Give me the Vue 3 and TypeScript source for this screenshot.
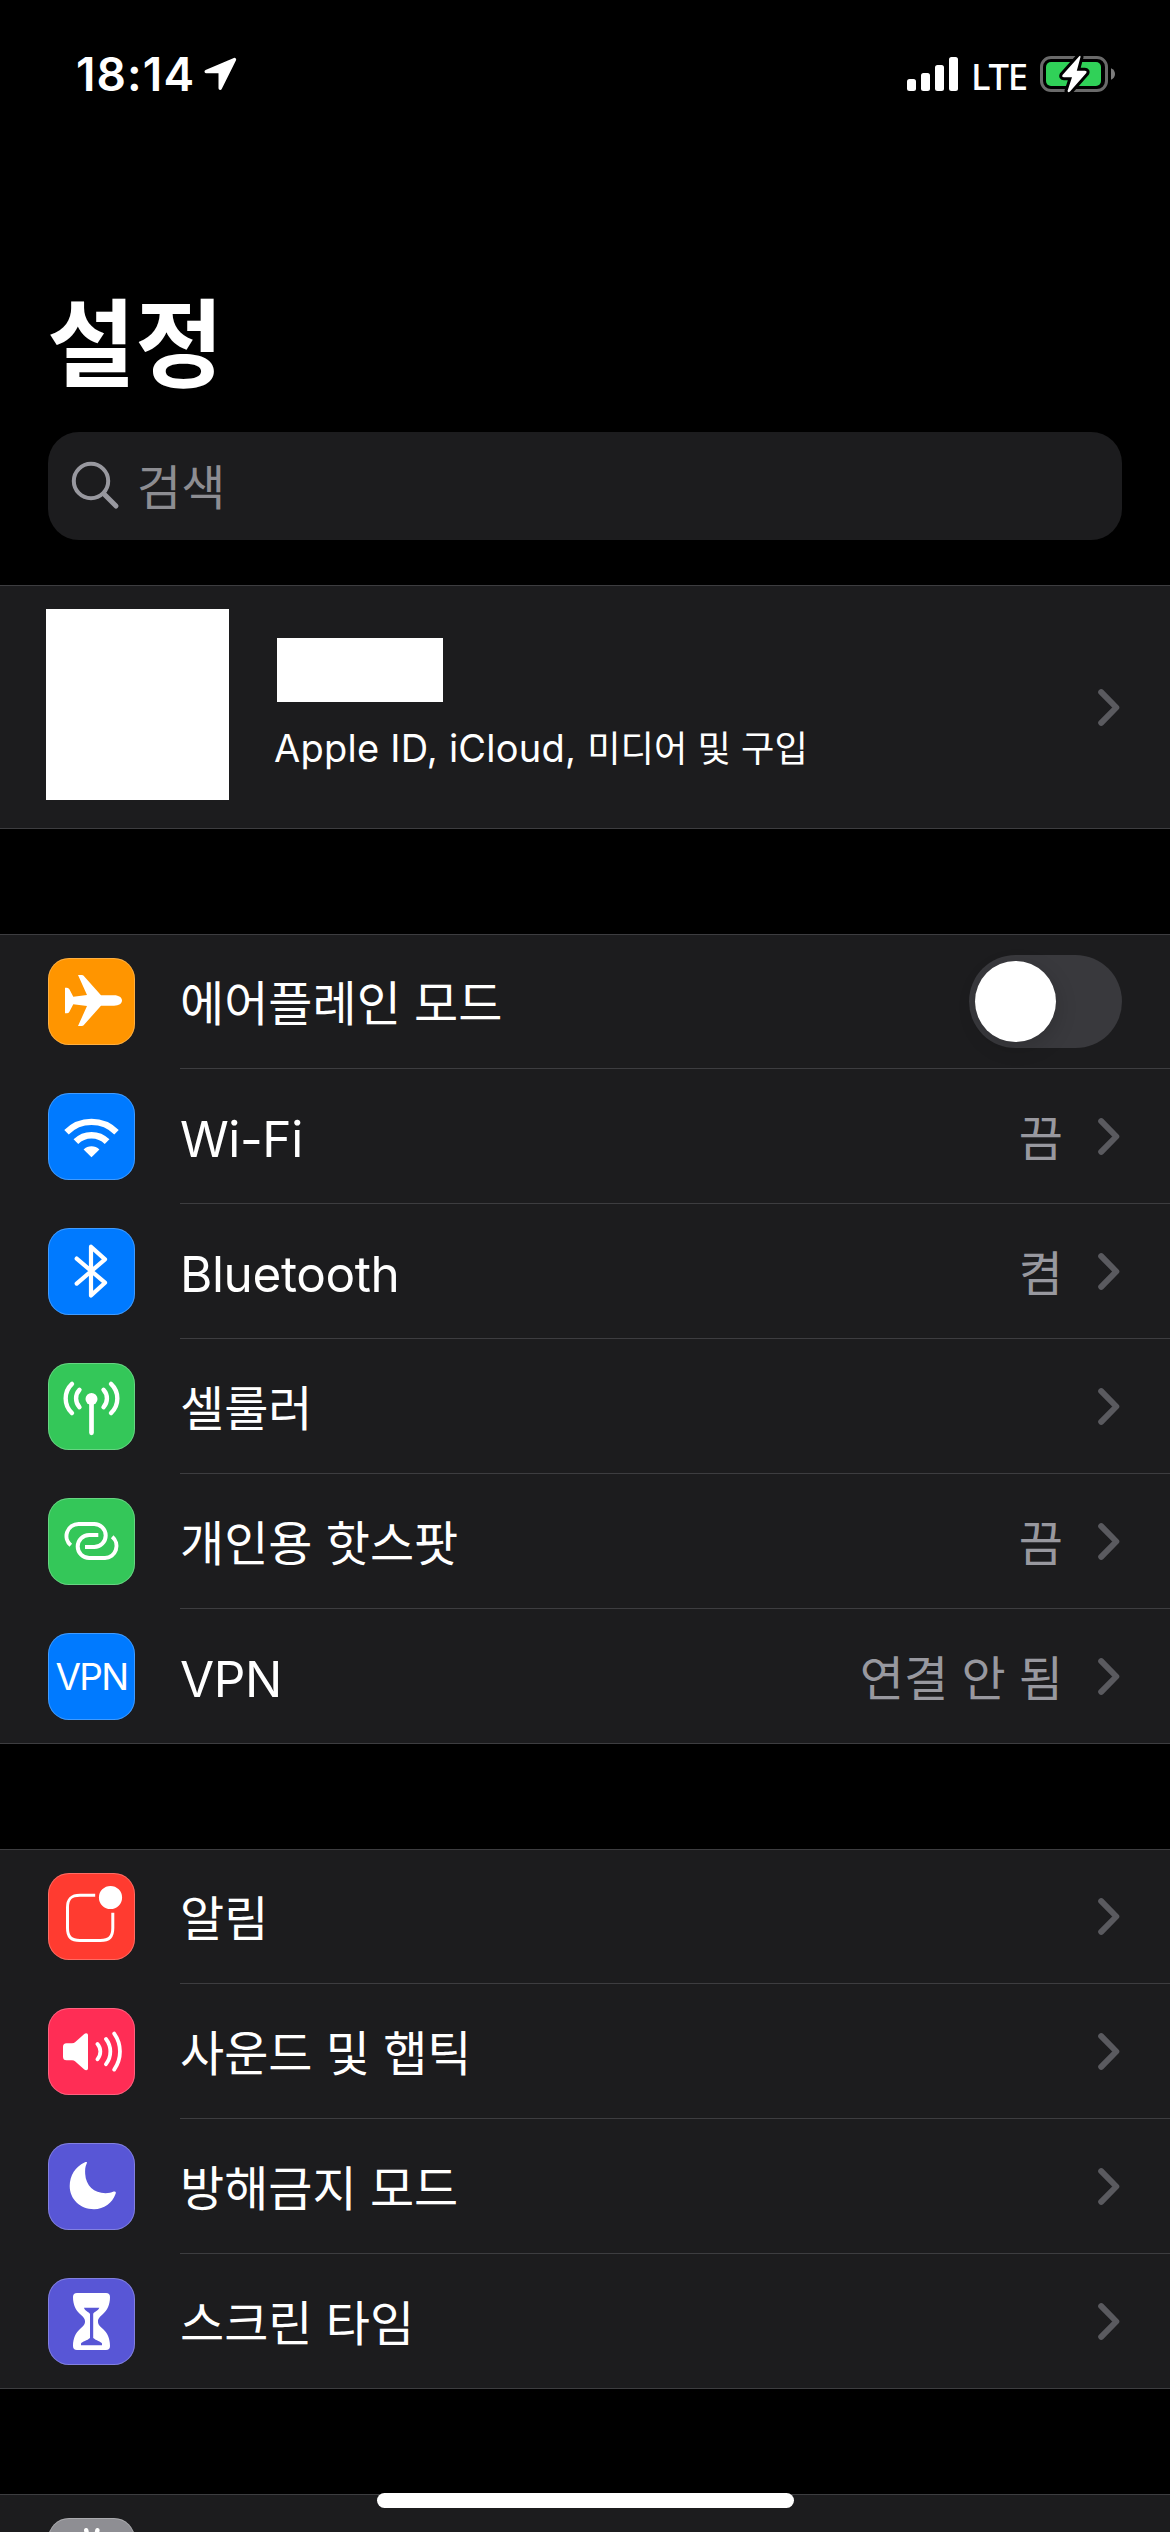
<script setup lang="ts">
import { ref } from 'vue'

interface Shape {
  d: string
  stroke?: number
  color?: string
  cap?: 'round' | 'butt'
}

interface Row {
  id: string
  label: string
  latin?: boolean
  color: string
  shapes: Shape[]
  badge?: string
  value?: string
  toggle?: boolean
}

const airplane = ref(false)

const connectivity: Row[] = [
  {
    id: 'airplane',
    label: '에어플레인 모드',
    color: '#ff9500',
    toggle: true,
    shapes: [
      {
        d: 'M53 37.3H66C71 37.3 74 39.6 74 42.5S71 47.7 66 47.7H53L36.5 66.3Q35.5 68 34 68H30L39 48L25.3 46.3L21.4 53.8Q20.5 55.3 19 55.3H17V29.7H19Q20.5 29.7 21.4 31.2L25.3 38.7L39 37L30 17H34Q35.5 17 36.5 18.7Z',
      },
    ],
  },
  {
    id: 'wifi',
    label: 'Wi-Fi',
    latin: true,
    color: '#007aff',
    value: '끔',
    shapes: [
      { d: 'M18.5 39.3A35.3 35.3 0 0 1 68.5 39.3', stroke: 6.3, cap: 'butt' },
      { d: 'M27.9 48.7A22 22 0 0 1 59.1 48.7', stroke: 6.6, cap: 'butt' },
      { d: 'M43.5 64.3L35.6 56.4A11.4 11.4 0 0 1 51.4 56.4Z' },
    ],
  },
  {
    id: 'bluetooth',
    label: 'Bluetooth',
    latin: true,
    color: '#007aff',
    value: '켬',
    shapes: [{ d: 'M28.7 30.6L57 54.7L43 67.5V18.7L57 31.4L28.7 55.6', stroke: 4.2 }],
  },
  {
    id: 'cellular',
    label: '셀룰러',
    color: '#34c759',
    shapes: [
      { d: 'M37.5 36A6 6 0 1 1 49.5 36A6 6 0 1 1 37.5 36Z' },
      { d: 'M43.5 36V69.8', stroke: 4.7 },
      { d: 'M31.5 26.8A12.8 12.8 0 0 0 31.5 44.2M55.5 26.8A12.8 12.8 0 0 1 55.5 44.2', stroke: 4.4 },
      { d: 'M24 20.9A20 20 0 0 0 24 50.1M63 20.9A20 20 0 0 1 63 50.1', stroke: 4.4 },
    ],
  },
  {
    id: 'hotspot',
    label: '개인용 핫스팟',
    color: '#34c759',
    value: '끔',
    shapes: [
      { d: 'M22.8 47.2A12 12 0 0 1 30.5 26H46.2A11.5 11.5 0 0 1 46.2 49H37', stroke: 4, cap: 'butt' },
      { d: 'M50.3 37H41.2A11.5 11.5 0 0 0 41.2 60H57A12 12 0 0 0 64.2 38.8', stroke: 4, cap: 'butt' },
    ],
  },
  {
    id: 'vpn',
    label: 'VPN',
    latin: true,
    color: '#007aff',
    badge: 'VPN',
    value: '연결 안 됨',
    shapes: [],
  },
]

const alerts: Row[] = [
  {
    id: 'notifications',
    label: '알림',
    color: '#ff3b30',
    shapes: [
      {
        d: 'M47.2 22.2H32C23 22.2 19.5 25.7 19.5 34.5V55C19.5 64 23 67.4 32 67.4H52.3C61.3 67.4 64.8 64 64.8 55V39.8',
        stroke: 3,
        cap: 'butt',
      },
      { d: 'M50.9 24.5A11.6 11.6 0 1 1 74.1 24.5A11.6 11.6 0 1 1 50.9 24.5Z' },
    ],
  },
  {
    id: 'sounds',
    label: '사운드 및 햅틱',
    color: '#ff2d55',
    shapes: [
      {
        d: 'M18 35.2H24Q26 35.2 27 34.3L36 26.2Q37 25.3 38.3 25.3Q40 25.3 40 27V60.5Q40 62.2 38.3 62.2Q37 62.2 36 61.3L27 53.3Q26 52.3 24 52.3H18.5Q15 52.3 15 48.8V38.7Q15 35.2 18.5 35.2Z',
      },
      {
        d: 'M49.5 36A11.6 11.6 0 0 1 49.5 51.2M58 31A20.5 20.5 0 0 1 58 56.2M66.2 25.6A31 31 0 0 1 66.2 61.6',
        stroke: 3.8,
      },
    ],
  },
  {
    id: 'dnd',
    label: '방해금지 모드',
    color: '#5856d6',
    shapes: [
      {
        d: 'M38.7 20.6C37 23.8 37 27.5 37.2 31C37.8 42.5 46 50.2 57.5 50.2C61 50.2 63.2 49.5 65.6 48.6C67.6 48 68.4 49 67.5 51C64.3 60.2 56 66.2 46 66.2C32 66.2 21.7 56 21.7 43C21.7 32.5 27.5 23.5 36.5 19.5C38.7 18.7 39.5 19 38.7 20.6Z',
      },
    ],
  },
  {
    id: 'screentime',
    label: '스크린 타임',
    color: '#5856d6',
    shapes: [
      {
        d: 'M29 15H58Q62 15 62 19C62 27 59 32.5 55 36C51 39.5 50 41 50 43.5S51 47.5 55 51C59 54.5 62 60 62 68Q62 72 58 72H29Q25 72 25 68C25 60 28 54.5 32 51C36 47.5 37 46 37 43.5S36 39.5 32 36C28 32.5 25 27 25 19Q25 15 29 15Z',
      },
      {
        d: 'M36 29.8H51.3C50.5 33 45.5 34 45.2 36V60C48 62.5 53 63.5 54 65.5V67.3H33V65.5C34 63.5 39.5 62.5 42 60V36C41 34 36.5 33 36 29.8Z',
        color: '#5856d6',
      },
    ],
  },
]

const general: Row[] = [
  {
    id: 'general',
    label: '',
    color: '#8e8e93',
    shapes: [{ d: 'M38.2 12.2L39.4 18M49.4 12.2L48.2 18', stroke: 4.4 }],
  },
]

const groups: Row[][] = [connectivity, alerts, general]
</script>

<template>
  <div class="screen">
    <header class="status">
      <div class="clock">
        <span class="time">18:14</span>
        <svg class="location" width="34" height="34" viewBox="0 0 34 34">
          <path d="M31.5 2.5L3.2 14.6H17.2V31.2Z" fill="#fff" stroke="#fff" stroke-width="3.4" stroke-linejoin="round" />
        </svg>
      </div>
      <div class="indicators">
        <svg class="signal" width="52" height="36" viewBox="0 0 52 36" fill="#fff">
          <rect x="0" y="23" width="9" height="12" rx="2.5" />
          <rect x="14" y="17" width="9" height="18" rx="2.5" />
          <rect x="28" y="9" width="9" height="26" rx="2.5" />
          <rect x="42" y="1" width="9" height="34" rx="2.5" />
        </svg>
        <span class="carrier">LTE</span>
        <svg class="battery" width="76" height="40" viewBox="0 0 76 40">
          <rect x="1.5" y="3.5" width="65" height="33" rx="9.5" fill="none" stroke="#6a6a6a" stroke-width="3" />
          <rect x="6" y="8" width="55" height="24" rx="5" fill="#30d158" />
          <path d="M71 14.2C73.6 15.3 75 17.5 75 20S73.6 24.7 71 25.8Z" fill="#7c7c7c" />
          <path
            d="M39 2.5L22.5 21Q21.5 23.2 24 23.2H32L27.5 37Q28 39 30 37.5L46.3 19Q47.3 16.8 44.8 16.8H36.8L40.5 3Q40.5 1 39 2.5Z"
            fill="#fff"
            stroke="#000"
            stroke-width="6"
            paint-order="stroke"
            stroke-linejoin="round"
          />
        </svg>
      </div>
    </header>

    <h1 class="title">설정</h1>

    <div class="search">
      <svg width="50" height="50" viewBox="0 0 50 50" fill="none" stroke="#98989f" stroke-linecap="round">
        <circle cx="20" cy="20" r="17.2" stroke-width="4" />
        <path d="M33.5 33.5L45 45" stroke-width="5" />
      </svg>
      <span class="placeholder">검색</span>
    </div>

    <section class="profile">
      <div class="avatar"></div>
      <div class="identity">
        <div class="name"></div>
        <p class="subtitle">
          <span class="en">Apple ID, iCloud, </span><span class="ko">미디어 및 구입</span>
        </p>
      </div>
      <svg class="chevron" width="22" height="37" viewBox="0 0 22 37">
        <path d="M3.2 3.2L18.3 18.5L3.2 33.8" />
      </svg>
    </section>

    <section v-for="(rows, index) in groups" :key="index" class="group">
      <div v-for="row in rows" :key="row.id" class="row">
        <div class="tile" :style="{ backgroundColor: row.color }">
          <span v-if="row.badge" class="badge">{{ row.badge }}</span>
          <svg v-else width="87" height="87" viewBox="0 0 87 87">
            <path
              v-for="(shape, i) in row.shapes"
              :key="i"
              :d="shape.d"
              :fill="shape.stroke ? 'none' : shape.color ?? '#fff'"
              :stroke="shape.stroke ? '#fff' : 'none'"
              :stroke-width="shape.stroke ?? 0"
              :stroke-linecap="shape.cap ?? 'round'"
              stroke-linejoin="round"
            />
          </svg>
        </div>
        <div class="content">
          <span class="label" :class="{ latin: row.latin }">{{ row.label }}</span>
          <button
            v-if="row.toggle"
            class="toggle"
            :class="{ on: airplane }"
            role="switch"
            :aria-checked="airplane"
            @click="airplane = !airplane"
          >
            <span class="knob"></span>
          </button>
          <template v-else>
            <span v-if="row.value" class="value">{{ row.value }}</span>
            <svg class="chevron" width="22" height="37" viewBox="0 0 22 37">
              <path d="M3.2 3.2L18.3 18.5L3.2 33.8" />
            </svg>
          </template>
        </div>
      </div>
    </section>

    <div class="home-indicator"></div>
  </div>
</template>

<style>
html,
body {
  margin: 0;
  background: #000;
}
</style>

<style scoped>
.screen {
  position: relative;
  width: 1170px;
  height: 2532px;
  overflow: hidden;
  background: #000;
  color: #fff;
  font-family: 'Noto Sans CJK KR', sans-serif;
}

.status {
  display: flex;
  justify-content: space-between;
  align-items: center;
  box-sizing: border-box;
  height: 148px;
  padding: 0 54px 0 76px;
}

.clock,
.indicators {
  display: flex;
  align-items: center;
}

.time {
  font: 600 46px/60px Inter, sans-serif;
  letter-spacing: 1.1px;
}

.location {
  margin-left: 8px;
}

.signal {
  margin-right: 12px;
}

.carrier {
  width: 54px;
  margin: 3px 15px 0 0;
  font: 500 36.5px/44px 'Noto Sans', sans-serif;
  letter-spacing: -1.2px;
  white-space: nowrap;
}

.title {
  margin: 120px 0 0 47px;
  font-size: 96px;
  line-height: 140px;
  font-weight: 700;
}

.search {
  display: flex;
  align-items: center;
  box-sizing: border-box;
  height: 108px;
  margin: 24px 48px 45px;
  padding-left: 23px;
  border-radius: 31px;
  background: #1c1c1e;
}

.placeholder {
  margin: 0 0 5px 16px;
  color: #8d8d92;
  font-size: 48px;
  line-height: 70px;
}

.profile {
  display: flex;
  align-items: center;
  box-sizing: border-box;
  height: 244px;
  padding: 0 50px 0 46px;
  border-top: 1px solid #3d3d40;
  border-bottom: 1px solid #3d3d40;
  background: #1c1c1e;
}

.avatar {
  width: 183px;
  height: 191px;
  margin-bottom: 5px;
  background: #fff;
}

.identity {
  flex: 1;
  margin: 0 0 9px 45px;
}

.name {
  width: 166px;
  height: 64px;
  margin: 6px 0 16px 3px;
  background: #fff;
}

.subtitle {
  margin: 0;
  height: 56px;
  line-height: 56px;
  white-space: pre;
}

.subtitle .en {
  font-family: Inter, sans-serif;
  font-size: 38px;
  letter-spacing: 0.25px;
}

.subtitle .ko {
  font-size: 36.3px;
  word-spacing: 2px;
}

.chevron {
  flex: none;
  fill: none;
  stroke: #5a5a5f;
  stroke-width: 6;
  stroke-linecap: round;
  stroke-linejoin: round;
}

.group {
  position: relative;
  margin-top: 105px;
  background: #1c1c1e;
}

.group::before {
  content: '';
  position: absolute;
  inset: 0 0 auto;
  height: 1px;
  background: #3d3d40;
}

.row {
  display: flex;
  align-items: center;
  height: 135px;
  padding-left: 48px;
}

.tile {
  display: flex;
  flex: none;
  justify-content: center;
  align-items: center;
  width: 87px;
  height: 87px;
  border-radius: 21px;
  box-shadow: inset 0 0 0 1px rgba(255, 255, 255, 0.25);
}

.badge {
  font: 400 37px/44px Inter, sans-serif;
  letter-spacing: -1.6px;
}

.content {
  display: flex;
  flex: 1;
  align-items: center;
  box-sizing: border-box;
  height: 135px;
  margin-left: 45px;
  padding-right: 48px;
  border-bottom: 1px solid #3d3d40;
}

.content > .chevron {
  margin-right: 2px;
}

.row:last-child {
  box-shadow: inset 0 -1px #3d3d40;
}

.label {
  flex: 1;
  padding-bottom: 3px;
  font-size: 48px;
  line-height: 70px;
  word-spacing: 2.5px;
}

.label.latin {
  padding: 5px 0 0;
  font-family: Inter, sans-serif;
  font-size: 49.5px;
  letter-spacing: -0.4px;
}

.value {
  margin-right: 35px;
  padding-bottom: 3px;
  color: #98989f;
  font-size: 48px;
  line-height: 70px;
  word-spacing: 2.5px;
}

.toggle {
  display: flex;
  width: 153px;
  height: 93px;
  padding: 6px;
  border: 0;
  border-radius: 47px;
  background: #39393d;
}

.toggle.on {
  justify-content: flex-end;
  background: #30d158;
}

.knob {
  width: 81px;
  height: 81px;
  border-radius: 50%;
  background: #fff;
  box-shadow: 2px 6px 20px rgba(0, 0, 0, 0.15);
}

.home-indicator {
  position: absolute;
  bottom: 24px;
  left: 377px;
  width: 417px;
  height: 15px;
  border-radius: 8px;
  background: #fff;
}
</style>
